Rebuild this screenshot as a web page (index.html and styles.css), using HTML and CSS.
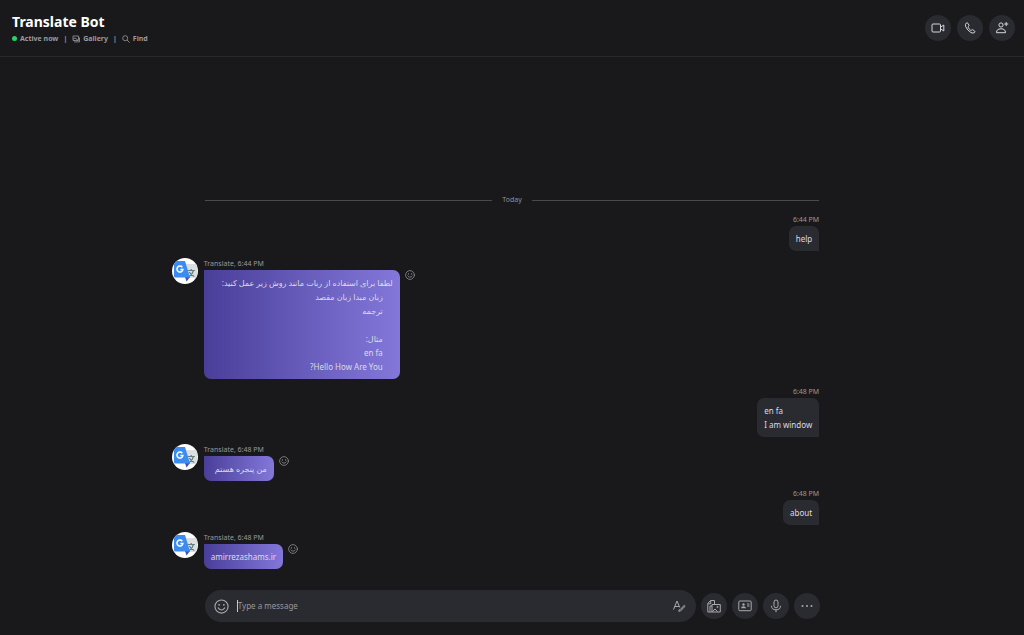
FILE: index.html
```html
<!DOCTYPE html>
<html lang="en">
<head>
<meta charset="utf-8">
<title>Translate Bot</title>
<link rel="stylesheet" href="styles.css">
</head>
<body>
<svg class="defs" aria-hidden="true">
  <defs>
    <clipPath id="disc"><circle cx="13" cy="13" r="13"/></clipPath>
    <symbol id="avatar" viewBox="0 0 26 26">
      <g clip-path="url(#disc)">
        <rect width="26" height="26" fill="#fff"/>
        <path d="M11 6h13q1 0 1 1v12q0 1-1 1h-9z" fill="#dcdedf"/>
        <path d="M13 19h5l-3.500 4.500z" fill="#3f51b5"/>
        <path d="M3.500 3h9.500l5 16.500H3.500q-1.500 0-1.500-1.500V4.500Q2 3 3.500 3z" fill="#3a8cf0"/>
        <path d="M10.300 9.200A3 3 0 1 0 10.900 11.600H8.400" fill="none" stroke="#fff" stroke-width="1.500"/>
        <path d="M15.800 12.500h7M19.200 11v1.500M21.500 12.500q-1 4-4.500 6M17.300 14q1.500 3 5 4.500" fill="none" stroke="#607d82" stroke-width="1.200"/>
      </g>
    </symbol>
    <symbol id="smile" viewBox="0 0 16 16">
      <g fill="none" stroke="currentColor" stroke-width="1.200" stroke-linecap="round">
        <circle cx="8" cy="8" r="7"/>
        <path d="M4.500 9.500q3.500 4.500 7 0"/>
      </g>
      <g fill="currentColor"><circle cx="5.500" cy="6.200" r="1"/><circle cx="10.500" cy="6.200" r="1"/></g>
    </symbol>
  </defs>
</svg>
<div class="app">
  <header class="header">
    <div class="heading">
      <h1 class="title">Translate Bot</h1>
      <div class="meta">
        <span class="dot"></span><span class="status">Active now</span><span class="bar">|</span>
        <button class="link"><svg class="meta-icon" viewBox="0 0 8 8"><path d="M1 1h5.500v4.500H1zM2 6.900h5.500V2.500M1 4l2-1 3 2.300" /></svg>Gallery</button><span class="bar">|</span>
        <button class="link find"><svg class="meta-icon" viewBox="0 0 8 8"><circle cx="3.200" cy="3.200" r="2.500"/><path d="M5 5l2.700 2.700"/></svg>Find</button>
      </div>
    </div>
    <div class="calls">
      <button class="round" aria-label="Video call"><svg class="icon bright" viewBox="0 0 14 14"><rect x="1" y="3" width="8.500" height="8" rx="1"/><path d="M9.500 6.200 12.800 4v6L9.500 7.800"/></svg></button>
      <button class="round" aria-label="Audio call"><svg class="icon bright" viewBox="0 0 14 14"><path d="M3.200 2.200q1-.9 1.700.1l1 1.700q.3.700-.3 1.300-.7.600-.3 1.300.8 1.600 2.200 2.600.6.400 1.200-.2.600-.5 1.200-.1l1.700 1.200q.7.500.1 1.200-1.500 1.500-3.700.3Q4.200 9.300 2.700 5.600 1.900 3.500 3.200 2.200z"/></svg></button>
      <button class="round" aria-label="Add people"><svg class="icon bright" viewBox="0 0 14 14"><circle cx="6" cy="4" r="2.100"/><path d="M1.500 11.700q0-3.900 4.500-3.900t4.500 3.900zM11.200 1v4M9.200 3h4"/></svg></button>
    </div>
  </header>

  <main class="chat">
    <div class="day">Today</div>
    <section class="msg sent">
      <div class="label">6:44 PM</div>
      <div class="bubble">help</div>
    </section>
    <section class="msg received">
      <svg class="avatar"><use href="#avatar"/></svg>
      <div class="body">
        <div class="label">Translate, 6:44 PM</div>
        <div class="bubble wide" dir="rtl" lang="fa">
          <p class="line">لطفا برای استفاده از ربات مانند روش زیر عمل کنید:</p>
          <div class="steps">
            <p class="line">زبان مبدا زبان مقصد</p>
            <p class="line">ترجمه</p>
            <p class="line">&nbsp;</p>
            <p class="line">مثال:</p>
            <p class="line">en fa</p>
            <p class="line">Hello How Are You?</p>
          </div>
        </div>
      </div>
      <button class="react" aria-label="React"><svg class="react-icon"><use href="#smile"/></svg></button>
    </section>
    <section class="msg sent">
      <div class="label">6:48 PM</div>
      <div class="bubble">en fa<br>I am window</div>
    </section>
    <section class="msg received">
      <svg class="avatar"><use href="#avatar"/></svg>
      <div class="body">
        <div class="label">Translate, 6:48 PM</div>
        <div class="bubble" dir="rtl" lang="fa">من پنجره هستم</div>
      </div>
      <button class="react" aria-label="React"><svg class="react-icon"><use href="#smile"/></svg></button>
    </section>
    <section class="msg sent">
      <div class="label">6:48 PM</div>
      <div class="bubble">about</div>
    </section>
    <section class="msg received">
      <svg class="avatar"><use href="#avatar"/></svg>
      <div class="body">
        <div class="label">Translate, 6:48 PM</div>
        <div class="bubble">amirrezashams.ir</div>
      </div>
      <button class="react" aria-label="React"><svg class="react-icon"><use href="#smile"/></svg></button>
    </section>
  </main>

  <footer class="composer">
    <div class="field">
      <button class="plain" aria-label="Emoji"><svg class="emoji"><use href="#smile"/></svg></button>
      <span class="caret"></span>
      <input class="input" type="text" placeholder="Type a message" aria-label="Type a message">
      <button class="plain" aria-label="Format"><svg class="icon" viewBox="0 0 14 14"><path d="M1.500 10.500 5 2l2.800 6.500M2.700 7.500h4.200M12.700 5.800 8.500 10.300M13.200 7 9.500 11M8.500 10.300q-1.600 0-1.800 1.900 2 .5 2.800-1.200"/></svg></button>
    </div>
    <button class="round" aria-label="Add files"><svg class="icon" viewBox="0 0 14 14"><path d="M5 13H.8V4.500L3.500 1.500h4v4M3.700 1.800v3H1M5 5.500h8.300V13H5zM3 12.500V7h2M5.500 12.500l2.500-2.500 2.500 2.500"/><circle cx="10.500" cy="8" r=".6"/></svg></button>
    <button class="round" aria-label="Send contacts"><svg class="icon" viewBox="0 0 14 14"><rect x=".8" y="2" width="12.400" height="9.700" rx="1"/><path d="M9 5h2.500M9 7h2.500"/><circle class="solid" cx="5.500" cy="5.500" r="1.200"/><path class="solid" d="M3 9.300q.2-2 2.500-2t2.500 2z"/></svg></button>
    <button class="round" aria-label="Voice message"><svg class="icon" viewBox="0 0 14 14"><rect x="5" y="1" width="4" height="7.800" rx="2"/><path d="M2.500 6.800q0 4 4.500 4t4.500-4M7 10.800v2.400"/></svg></button>
    <button class="round" aria-label="More"><svg class="icon" viewBox="0 0 14 14"><g class="solid"><circle cx="2.500" cy="7" r="1"/><circle cx="7" cy="7" r="1"/><circle cx="11.500" cy="7" r="1"/></g></svg></button>
  </footer>
</div>
</body>
</html>
```
FILE: styles.css
```css
* {
  box-sizing: border-box;
}

body {
  margin: 0;
  background: #19191b;
  color: #dcdce0;
  font-family: "Noto Sans", "DejaVu Sans", sans-serif;
  font-size: 8px;
  line-height: 14px;
}

button,
input {
  margin: 0;
  padding: 0;
  border: 0;
  background: none;
  color: inherit;
  font: inherit;
}

.defs {
  position: absolute;
  width: 0;
  height: 0;
}

.app {
  display: flex;
  flex-direction: column;
  min-height: 100vh;
}

.header {
  display: flex;
  justify-content: space-between;
  align-items: flex-start;
  padding: 12px 9px 11px 12px;
  border-bottom: 1px solid #29292d;
}

.title {
  margin: 0;
  color: #fff;
  font-size: 14px;
  font-weight: 700;
  line-height: 20px;
}

.meta {
  display: flex;
  align-items: center;
  color: #9b9b9e;
  font-size: 7px;
  font-weight: 700;
  line-height: 13px;
}

.dot {
  width: 5px;
  height: 5px;
  margin-right: 3px;
  border-radius: 50%;
  background: #25d366;
}

.bar {
  margin: 0 5px;
}

.link {
  display: flex;
  align-items: center;
  gap: 3px;
}

.meta-icon {
  width: 8px;
  height: 8px;
  fill: none;
  stroke: currentColor;
  stroke-width: 0.8;
}

.calls {
  display: flex;
  gap: 6px;
  padding-top: 3px;
}

.round {
  display: flex;
  flex: none;
  align-items: center;
  justify-content: center;
  width: 26px;
  height: 26px;
  border-radius: 50%;
  background: #2a2a31;
}

.icon {
  display: block;
  width: 14px;
  height: 14px;
  fill: none;
  stroke: #a8a8ac;
  stroke-linejoin: round;
}

.bright {
  stroke: #d6d6d9;
}

.solid {
  fill: #a8a8ac;
  stroke: none;
}

.chat {
  display: flex;
  flex: 1;
  flex-direction: column;
  justify-content: flex-end;
  gap: 7px;
  padding: 0 20%;
}

.day {
  display: flex;
  align-items: center;
  gap: 10px;
  color: #929295;
  font-size: 7px;
}

.day::before,
.day::after {
  flex: 1;
  height: 1px;
  background: #4a4a4d;
  content: "";
}

.msg {
  display: flex;
}

.sent {
  flex-direction: column;
  align-items: flex-end;
}

.received {
  align-items: flex-start;
  margin-left: -33px;
}

.label {
  color: #98989b;
  font-size: 7px;
  line-height: 12px;
}

.bubble {
  width: fit-content;
  min-width: 30px;
  padding: 6px 7px 5px;
  border-radius: 7px;
}

.sent .bubble {
  border-bottom-right-radius: 0;
  background: #2a2a31;
}

.received .bubble {
  min-width: 70px;
  border-top-left-radius: 0;
  background: linear-gradient(to right, #493f99, #8378da);
}

.received .wide {
  min-width: 196px;
}

.line {
  margin: 0;
}

.steps {
  padding-right: 10px;
}

.avatar {
  flex: none;
  width: 26px;
  height: 26px;
  margin-right: 6px;
}

.react {
  margin: 12px 0 0 5px;
  color: #98989b;
}

.react-icon {
  display: block;
  width: 10px;
  height: 10px;
}

.composer {
  display: flex;
  align-items: center;
  gap: 5px;
  padding: 21px calc(20% - 1px) 13px 20%;
}

.field {
  display: flex;
  flex: 1;
  align-items: center;
  height: 32px;
  padding: 0 10px 0 9px;
  border-radius: 16px;
  background: #2a2a31;
}

.plain {
  color: #a8a8ac;
}

.emoji {
  display: block;
  width: 15px;
  height: 15px;
}

.caret {
  width: 1px;
  height: 12px;
  margin-left: 8px;
  background: #c8c8cc;
}

.input {
  flex: 1;
  min-width: 0;
  outline: 0;
}

.input::placeholder {
  color: #98989b;
  opacity: 1;
}
```
